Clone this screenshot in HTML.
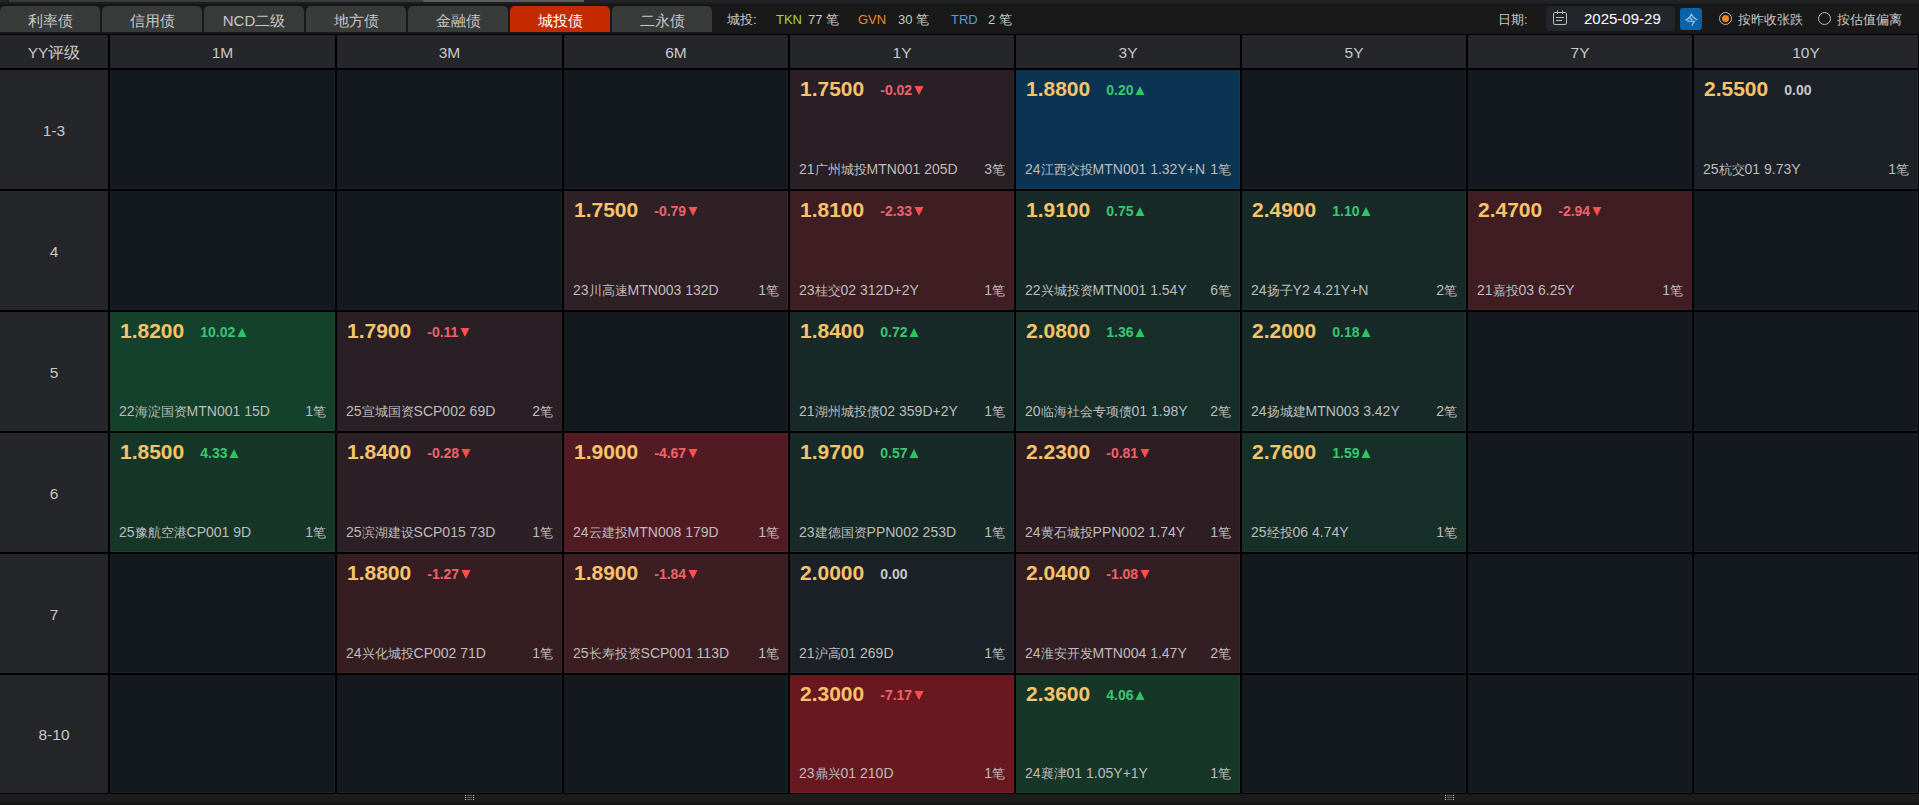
<!DOCTYPE html><html><head><meta charset="utf-8"><style>
i{font-style:normal}
.tri{margin-left:2px;vertical-align:0px}
.k{font-size:13px}
*{margin:0;padding:0;box-sizing:border-box}
html,body{width:1919px;height:805px;overflow:hidden;background:#191919;font-family:"Liberation Sans",sans-serif;position:relative}
.a{position:absolute}
.tab{position:absolute;top:6px;height:26px;width:100px;background:#393a3a;border-radius:5px 5px 0 0;color:#c8c8c8;font-size:15px;line-height:29px;text-align:center}
.tab.on{background:#c42a00;color:#fff}
.hdr{position:absolute;top:35px;height:33px;background:#252629;color:#c8c8c8;font-size:15.5px;line-height:35px;text-align:center}
.lbl{position:absolute;left:0;width:108px;background:#252629;color:#c8c8c8;font-size:15.5px;text-align:center}
.cell{position:absolute;background:#13191f;box-shadow:inset -1px -1px 0 rgba(255,255,255,0.035)}
.v{position:absolute;left:10px;top:7px;font-size:21px;font-weight:bold;color:#f7c46c;white-space:nowrap;line-height:24px}
.c{font-size:14px;margin-left:16px;font-weight:bold;vertical-align:1px}
.c.d{color:#f0626a}.c.u{color:#38c672}.c.n{color:#c8c8c8}
.nm{position:absolute;left:9px;bottom:11px;font-size:14px;color:#bdbdbd;white-space:nowrap;line-height:16px}
.ct{position:absolute;right:9px;bottom:11px;font-size:14px;color:#bdbdbd;white-space:nowrap;line-height:16px}
</style></head><body>
<div class="a" style="left:0;top:0;width:1919px;height:2px;background:#222327"></div>
<div class="a" style="left:9px;top:0;width:575px;height:2px;background:#393a3d"></div>
<div class="a" style="left:423px;top:0;width:161px;height:2px;background:#5b5b5b"></div>
<div class="a" style="left:0;top:2px;width:1919px;height:2px;background:#1e1f21"></div>
<div class="a" style="left:0;top:4px;width:1919px;height:2px;background:#161616"></div>
<div class="tab" style="left:0px">利率债</div>
<div class="tab" style="left:102px">信用债</div>
<div class="tab" style="left:204px">NCD二级</div>
<div class="tab" style="left:306px">地方债</div>
<div class="tab" style="left:408px">金融债</div>
<div class="tab on" style="left:510px">城投债</div>
<div class="tab" style="left:612px">二永债</div>
<div class="a" style="left:727px;top:11px;font-size:13px;line-height:18px;color:#c8c8c8;white-space:nowrap">城投:</div>
<div class="a" style="left:776px;top:11px;font-size:13px;line-height:18px;color:#a6d63e">TKN</div>
<div class="a" style="left:808px;top:11px;font-size:13px;line-height:18px;color:#c8c8c8;white-space:nowrap">77 笔</div>
<div class="a" style="left:858px;top:11px;font-size:13px;line-height:18px;color:#e98b2a">GVN</div>
<div class="a" style="left:898px;top:11px;font-size:13px;line-height:18px;color:#c8c8c8;white-space:nowrap">30 笔</div>
<div class="a" style="left:951px;top:11px;font-size:13px;line-height:18px;color:#4a9ee0">TRD</div>
<div class="a" style="left:988px;top:11px;font-size:13px;line-height:18px;color:#c8c8c8;white-space:nowrap">2 笔</div>
<div class="a" style="left:1498px;top:11px;font-size:13px;line-height:18px;color:#c8c8c8;white-space:nowrap">日期:</div>
<div class="a" style="left:1546px;top:6px;width:129px;height:25px;background:#22252a;border-radius:4px"></div>
<svg class="a" style="left:1552px;top:10px" width="16" height="16" viewBox="0 0 16 16"><rect x="1.5" y="2.5" width="13" height="12" rx="1.5" fill="none" stroke="#bbb" stroke-width="1"/><line x1="5.5" y1="0.5" x2="5.5" y2="4" stroke="#bbb"/><line x1="10.5" y1="0.5" x2="10.5" y2="4" stroke="#bbb"/><line x1="4" y1="7.5" x2="12" y2="7.5" stroke="#bbb"/><line x1="4" y1="10.5" x2="10" y2="10.5" stroke="#bbb"/></svg>
<div class="a" style="left:1584px;top:10px;font-size:15px;line-height:18px;color:#fff;white-space:nowrap">2025-09-29</div>
<div class="a" style="left:1680px;top:8px;width:22px;height:22px;background:#0a62a8;border-radius:3px;color:#b8dcff;font-size:13px;line-height:23px;text-align:center">今</div>
<div class="a" style="left:1719px;top:12px;width:13px;height:13px;border:1.5px solid #bbb;border-radius:50%"></div>
<div class="a" style="left:1722px;top:15px;width:7px;height:7px;background:#f58220;border-radius:50%"></div>
<div class="a" style="left:1738px;top:11px;font-size:13px;line-height:18px;color:#c8c8c8;white-space:nowrap">按昨收张跌</div>
<div class="a" style="left:1818px;top:12px;width:13px;height:13px;border:1.5px solid #bbb;border-radius:50%"></div>
<div class="a" style="left:1837px;top:11px;font-size:13px;line-height:18px;color:#c8c8c8;white-space:nowrap">按估值偏离</div>
<div class="a" style="left:0;top:34px;width:1919px;height:760px;background:#000"></div>
<div class="hdr" style="left:0;width:108px">YY评级</div>
<div class="hdr" style="left:110px;width:225px">1M</div>
<div class="hdr" style="left:337px;width:225px">3M</div>
<div class="hdr" style="left:564px;width:224px">6M</div>
<div class="hdr" style="left:790px;width:224px">1Y</div>
<div class="hdr" style="left:1016px;width:224px">3Y</div>
<div class="hdr" style="left:1242px;width:224px">5Y</div>
<div class="hdr" style="left:1468px;width:224px">7Y</div>
<div class="hdr" style="left:1694px;width:224px">10Y</div>
<div class="lbl" style="top:70px;height:119px;line-height:121px">1-3</div>
<div class="cell" style="left:110px;top:70px;width:225px;height:119px"></div>
<div class="cell" style="left:337px;top:70px;width:225px;height:119px"></div>
<div class="cell" style="left:564px;top:70px;width:224px;height:119px"></div>
<div class="cell" style="left:790px;top:70px;width:224px;height:119px;background:#2a1f25"><div class="v">1.7500<span class="c d">-0.02<svg class="tri" width="10" height="9" viewBox="0 0 10 9"><polygon points="0.5,0 9.5,0 5,9" fill="#ff4f4f"/></svg></span></div><div class="nm">21<i class="k">广州城投</i>MTN001 205D</div><div class="ct">3<i class="k">笔</i></div></div>
<div class="cell" style="left:1016px;top:70px;width:224px;height:119px;background:#0b3352"><div class="v">1.8800<span class="c u">0.20<svg class="tri" width="10" height="9" viewBox="0 0 10 9"><polygon points="0.5,9 9.5,9 5,0" fill="#2ec463"/></svg></span></div><div class="nm">24<i class="k">江西交投</i>MTN001 1.32Y+N</div><div class="ct">1<i class="k">笔</i></div></div>
<div class="cell" style="left:1242px;top:70px;width:224px;height:119px"></div>
<div class="cell" style="left:1468px;top:70px;width:224px;height:119px"></div>
<div class="cell" style="left:1694px;top:70px;width:224px;height:119px;background:#1c2127"><div class="v">2.5500<span class="c n">0.00</span></div><div class="nm">25<i class="k">杭交</i>01 9.73Y</div><div class="ct">1<i class="k">笔</i></div></div>
<div class="lbl" style="top:191px;height:119px;line-height:121px">4</div>
<div class="cell" style="left:110px;top:191px;width:225px;height:119px"></div>
<div class="cell" style="left:337px;top:191px;width:225px;height:119px"></div>
<div class="cell" style="left:564px;top:191px;width:224px;height:119px;background:#2e2025"><div class="v">1.7500<span class="c d">-0.79<svg class="tri" width="10" height="9" viewBox="0 0 10 9"><polygon points="0.5,0 9.5,0 5,9" fill="#ff4f4f"/></svg></span></div><div class="nm">23<i class="k">川高速</i>MTN003 132D</div><div class="ct">1<i class="k">笔</i></div></div>
<div class="cell" style="left:790px;top:191px;width:224px;height:119px;background:#3e1d23"><div class="v">1.8100<span class="c d">-2.33<svg class="tri" width="10" height="9" viewBox="0 0 10 9"><polygon points="0.5,0 9.5,0 5,9" fill="#ff4f4f"/></svg></span></div><div class="nm">23<i class="k">桂交</i>02 312D+2Y</div><div class="ct">1<i class="k">笔</i></div></div>
<div class="cell" style="left:1016px;top:191px;width:224px;height:119px;background:#182a28"><div class="v">1.9100<span class="c u">0.75<svg class="tri" width="10" height="9" viewBox="0 0 10 9"><polygon points="0.5,9 9.5,9 5,0" fill="#2ec463"/></svg></span></div><div class="nm">22<i class="k">兴城投资</i>MTN001 1.54Y</div><div class="ct">6<i class="k">笔</i></div></div>
<div class="cell" style="left:1242px;top:191px;width:224px;height:119px;background:#182a28"><div class="v">2.4900<span class="c u">1.10<svg class="tri" width="10" height="9" viewBox="0 0 10 9"><polygon points="0.5,9 9.5,9 5,0" fill="#2ec463"/></svg></span></div><div class="nm">24<i class="k">扬子</i>Y2 4.21Y+N</div><div class="ct">2<i class="k">笔</i></div></div>
<div class="cell" style="left:1468px;top:191px;width:224px;height:119px;background:#3f1d22"><div class="v">2.4700<span class="c d">-2.94<svg class="tri" width="10" height="9" viewBox="0 0 10 9"><polygon points="0.5,0 9.5,0 5,9" fill="#ff4f4f"/></svg></span></div><div class="nm">21<i class="k">嘉投</i>03 6.25Y</div><div class="ct">1<i class="k">笔</i></div></div>
<div class="cell" style="left:1694px;top:191px;width:224px;height:119px"></div>
<div class="lbl" style="top:312px;height:119px;line-height:121px">5</div>
<div class="cell" style="left:110px;top:312px;width:225px;height:119px;background:#13412c"><div class="v">1.8200<span class="c u">10.02<svg class="tri" width="10" height="9" viewBox="0 0 10 9"><polygon points="0.5,9 9.5,9 5,0" fill="#2ec463"/></svg></span></div><div class="nm">22<i class="k">海淀国资</i>MTN001 15D</div><div class="ct">1<i class="k">笔</i></div></div>
<div class="cell" style="left:337px;top:312px;width:225px;height:119px;background:#2a1f25"><div class="v">1.7900<span class="c d">-0.11<svg class="tri" width="10" height="9" viewBox="0 0 10 9"><polygon points="0.5,0 9.5,0 5,9" fill="#ff4f4f"/></svg></span></div><div class="nm">25<i class="k">宣城国资</i>SCP002 69D</div><div class="ct">2<i class="k">笔</i></div></div>
<div class="cell" style="left:564px;top:312px;width:224px;height:119px"></div>
<div class="cell" style="left:790px;top:312px;width:224px;height:119px;background:#182a28"><div class="v">1.8400<span class="c u">0.72<svg class="tri" width="10" height="9" viewBox="0 0 10 9"><polygon points="0.5,9 9.5,9 5,0" fill="#2ec463"/></svg></span></div><div class="nm">21<i class="k">湖州城投债</i>02 359D+2Y</div><div class="ct">1<i class="k">笔</i></div></div>
<div class="cell" style="left:1016px;top:312px;width:224px;height:119px;background:#172e29"><div class="v">2.0800<span class="c u">1.36<svg class="tri" width="10" height="9" viewBox="0 0 10 9"><polygon points="0.5,9 9.5,9 5,0" fill="#2ec463"/></svg></span></div><div class="nm">20<i class="k">临海社会专项债</i>01 1.98Y</div><div class="ct">2<i class="k">笔</i></div></div>
<div class="cell" style="left:1242px;top:312px;width:224px;height:119px;background:#182a28"><div class="v">2.2000<span class="c u">0.18<svg class="tri" width="10" height="9" viewBox="0 0 10 9"><polygon points="0.5,9 9.5,9 5,0" fill="#2ec463"/></svg></span></div><div class="nm">24<i class="k">扬城建</i>MTN003 3.42Y</div><div class="ct">2<i class="k">笔</i></div></div>
<div class="cell" style="left:1468px;top:312px;width:224px;height:119px"></div>
<div class="cell" style="left:1694px;top:312px;width:224px;height:119px"></div>
<div class="lbl" style="top:433px;height:119px;line-height:121px">6</div>
<div class="cell" style="left:110px;top:433px;width:225px;height:119px;background:#163728"><div class="v">1.8500<span class="c u">4.33<svg class="tri" width="10" height="9" viewBox="0 0 10 9"><polygon points="0.5,9 9.5,9 5,0" fill="#2ec463"/></svg></span></div><div class="nm">25<i class="k">豫航空港</i>CP001 9D</div><div class="ct">1<i class="k">笔</i></div></div>
<div class="cell" style="left:337px;top:433px;width:225px;height:119px;background:#2c1f25"><div class="v">1.8400<span class="c d">-0.28<svg class="tri" width="10" height="9" viewBox="0 0 10 9"><polygon points="0.5,0 9.5,0 5,9" fill="#ff4f4f"/></svg></span></div><div class="nm">25<i class="k">滨湖建设</i>SCP015 73D</div><div class="ct">1<i class="k">笔</i></div></div>
<div class="cell" style="left:564px;top:433px;width:224px;height:119px;background:#521b24"><div class="v">1.9000<span class="c d">-4.67<svg class="tri" width="10" height="9" viewBox="0 0 10 9"><polygon points="0.5,0 9.5,0 5,9" fill="#ff4f4f"/></svg></span></div><div class="nm">24<i class="k">云建投</i>MTN008 179D</div><div class="ct">1<i class="k">笔</i></div></div>
<div class="cell" style="left:790px;top:433px;width:224px;height:119px;background:#182a28"><div class="v">1.9700<span class="c u">0.57<svg class="tri" width="10" height="9" viewBox="0 0 10 9"><polygon points="0.5,9 9.5,9 5,0" fill="#2ec463"/></svg></span></div><div class="nm">23<i class="k">建德国资</i>PPN002 253D</div><div class="ct">1<i class="k">笔</i></div></div>
<div class="cell" style="left:1016px;top:433px;width:224px;height:119px;background:#2e1e23"><div class="v">2.2300<span class="c d">-0.81<svg class="tri" width="10" height="9" viewBox="0 0 10 9"><polygon points="0.5,0 9.5,0 5,9" fill="#ff4f4f"/></svg></span></div><div class="nm">24<i class="k">黄石城投</i>PPN002 1.74Y</div><div class="ct">1<i class="k">笔</i></div></div>
<div class="cell" style="left:1242px;top:433px;width:224px;height:119px;background:#162f29"><div class="v">2.7600<span class="c u">1.59<svg class="tri" width="10" height="9" viewBox="0 0 10 9"><polygon points="0.5,9 9.5,9 5,0" fill="#2ec463"/></svg></span></div><div class="nm">25<i class="k">经投</i>06 4.74Y</div><div class="ct">1<i class="k">笔</i></div></div>
<div class="cell" style="left:1468px;top:433px;width:224px;height:119px"></div>
<div class="cell" style="left:1694px;top:433px;width:224px;height:119px"></div>
<div class="lbl" style="top:554px;height:119px;line-height:121px">7</div>
<div class="cell" style="left:110px;top:554px;width:225px;height:119px"></div>
<div class="cell" style="left:337px;top:554px;width:225px;height:119px;background:#361d22"><div class="v">1.8800<span class="c d">-1.27<svg class="tri" width="10" height="9" viewBox="0 0 10 9"><polygon points="0.5,0 9.5,0 5,9" fill="#ff4f4f"/></svg></span></div><div class="nm">24<i class="k">兴化城投</i>CP002 71D</div><div class="ct">1<i class="k">笔</i></div></div>
<div class="cell" style="left:564px;top:554px;width:224px;height:119px;background:#3b1d22"><div class="v">1.8900<span class="c d">-1.84<svg class="tri" width="10" height="9" viewBox="0 0 10 9"><polygon points="0.5,0 9.5,0 5,9" fill="#ff4f4f"/></svg></span></div><div class="nm">25<i class="k">长寿投资</i>SCP001 113D</div><div class="ct">1<i class="k">笔</i></div></div>
<div class="cell" style="left:790px;top:554px;width:224px;height:119px;background:#1b2127"><div class="v">2.0000<span class="c n">0.00</span></div><div class="nm">21<i class="k">沪高</i>01 269D</div><div class="ct">1<i class="k">笔</i></div></div>
<div class="cell" style="left:1016px;top:554px;width:224px;height:119px;background:#331e23"><div class="v">2.0400<span class="c d">-1.08<svg class="tri" width="10" height="9" viewBox="0 0 10 9"><polygon points="0.5,0 9.5,0 5,9" fill="#ff4f4f"/></svg></span></div><div class="nm">24<i class="k">淮安开发</i>MTN004 1.47Y</div><div class="ct">2<i class="k">笔</i></div></div>
<div class="cell" style="left:1242px;top:554px;width:224px;height:119px"></div>
<div class="cell" style="left:1468px;top:554px;width:224px;height:119px"></div>
<div class="cell" style="left:1694px;top:554px;width:224px;height:119px"></div>
<div class="lbl" style="top:675px;height:118px;line-height:120px">8-10</div>
<div class="cell" style="left:110px;top:675px;width:225px;height:118px"></div>
<div class="cell" style="left:337px;top:675px;width:225px;height:118px"></div>
<div class="cell" style="left:564px;top:675px;width:224px;height:118px"></div>
<div class="cell" style="left:790px;top:675px;width:224px;height:118px;background:#6a1820"><div class="v">2.3000<span class="c d">-7.17<svg class="tri" width="10" height="9" viewBox="0 0 10 9"><polygon points="0.5,0 9.5,0 5,9" fill="#ff4f4f"/></svg></span></div><div class="nm">23<i class="k">鼎兴</i>01 210D</div><div class="ct">1<i class="k">笔</i></div></div>
<div class="cell" style="left:1016px;top:675px;width:224px;height:118px;background:#163628"><div class="v">2.3600<span class="c u">4.06<svg class="tri" width="10" height="9" viewBox="0 0 10 9"><polygon points="0.5,9 9.5,9 5,0" fill="#2ec463"/></svg></span></div><div class="nm">24<i class="k">襄津</i>01 1.05Y+1Y</div><div class="ct">1<i class="k">笔</i></div></div>
<div class="cell" style="left:1242px;top:675px;width:224px;height:118px"></div>
<div class="cell" style="left:1468px;top:675px;width:224px;height:118px"></div>
<div class="cell" style="left:1694px;top:675px;width:224px;height:118px"></div>
<div class="a" style="left:0;top:794px;width:1919px;height:8px;background:#1c1c1c"></div>
<div class="a" style="left:0;top:802px;width:1919px;height:3px;background:#161616"></div>
<div class="a" style="left:465px;top:795px;width:1px;height:1px;background:#ccc"></div>
<div class="a" style="left:467px;top:795px;width:5px;height:1px;background:#5a5a5a"></div>
<div class="a" style="left:473px;top:795px;width:1px;height:1px;background:#ccc"></div>
<div class="a" style="left:465px;top:797px;width:1px;height:1px;background:#ccc"></div>
<div class="a" style="left:467px;top:797px;width:5px;height:1px;background:#5a5a5a"></div>
<div class="a" style="left:473px;top:797px;width:1px;height:1px;background:#ccc"></div>
<div class="a" style="left:465px;top:799px;width:1px;height:1px;background:#ccc"></div>
<div class="a" style="left:467px;top:799px;width:5px;height:1px;background:#5a5a5a"></div>
<div class="a" style="left:473px;top:799px;width:1px;height:1px;background:#ccc"></div>
<div class="a" style="left:1445px;top:795px;width:1px;height:1px;background:#ccc"></div>
<div class="a" style="left:1447px;top:795px;width:5px;height:1px;background:#5a5a5a"></div>
<div class="a" style="left:1453px;top:795px;width:1px;height:1px;background:#ccc"></div>
<div class="a" style="left:1445px;top:797px;width:1px;height:1px;background:#ccc"></div>
<div class="a" style="left:1447px;top:797px;width:5px;height:1px;background:#5a5a5a"></div>
<div class="a" style="left:1453px;top:797px;width:1px;height:1px;background:#ccc"></div>
<div class="a" style="left:1445px;top:799px;width:1px;height:1px;background:#ccc"></div>
<div class="a" style="left:1447px;top:799px;width:5px;height:1px;background:#5a5a5a"></div>
<div class="a" style="left:1453px;top:799px;width:1px;height:1px;background:#ccc"></div>
</body></html>
